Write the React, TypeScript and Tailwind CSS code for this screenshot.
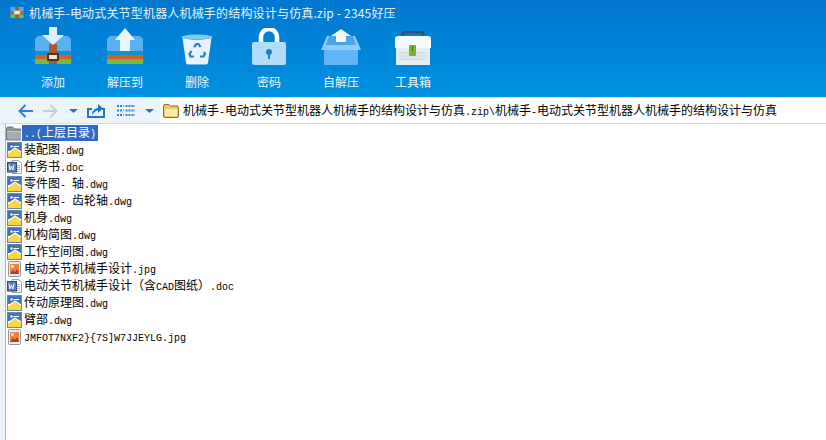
import React from "react";

const mono = { fontFamily: '"Liberation Mono","Noto Sans CJK SC",monospace' };
const ui = { fontFamily: '"Noto Sans CJK SC",sans-serif' };

function Mixed({ text }: { text: string }) {
  const runs = text.match(/[\x20-\x7e]+|[^\x20-\x7e]+/g) ?? [];
  return (
    <span className="whitespace-pre">
      {runs.map((r, i) => (
        <span key={i} className={/^[\x20-\x7e]/.test(r) ? "text-[10px]" : "text-[12px]"}>
          {r}
        </span>
      ))}
    </span>
  );
}

function Dwg() {
  return (
    <svg width="16" height="16" viewBox="0 0 16 16" className="shrink-0">
      <rect x="1.5" y="0.5" width="14" height="15" fill="#fff" stroke="#6d87a8" />
      <rect x="2" y="1" width="13" height="8" fill="#3d78bd" />
      <path d="M2 11 L9 6 L15 10 L15 15 L2 15Z" fill="#f9d648" />
      <path d="M2 11 L9 6 L15 10" fill="none" stroke="#fff" strokeWidth="1.2" />
      <path d="M4 4.5h9" stroke="#fff" strokeWidth="1" />
      <rect x="4" y="3" width="3" height="3" fill="#fff" stroke="#1f4a7d" strokeWidth="0.6" />
    </svg>
  );
}
function Doc() {
  return (
    <svg width="16" height="16" viewBox="0 0 16 16" className="shrink-0">
      <path d="M6 1.5h6.5l3 3v10H6z" fill="#fff" stroke="#9aa3ad" />
      <path d="M10.5 6.5h3.5M10.5 8.5h3.5M10.5 10.5h3.5M10.5 12.5h3.5" stroke="#a9b8cc" />
      <rect x="1.5" y="3.5" width="9" height="9.5" fill="#5b79b8" stroke="#2d4a86" />
      <path d="M3 5.5l1.1 5.5 1.4-4 1.4 4L8 5.5" fill="none" stroke="#fff" strokeWidth="1" />
    </svg>
  );
}
function Jpg() {
  return (
    <svg width="16" height="16" viewBox="0 0 16 16" className="shrink-0">
      <rect x="2.5" y="0.5" width="12" height="15" rx="1" fill="#e8edf3" stroke="#8b97a8" />
      <rect x="4" y="3" width="9" height="10" fill="#e8833f" />
      <path d="M4 13l3-4 2 2 2-3 2 5z" fill="#b5391f" />
      <rect x="5" y="4" width="3" height="3" fill="#f7d9a0" />
    </svg>
  );
}
function UpFolder() {
  return (
    <svg width="16" height="16" viewBox="0 0 16 16" className="shrink-0">
      <path d="M0.5 3.5l1-1.5h5l2 2h6v11h-14z" fill="#8f9498" stroke="#6c7276" />
      <path d="M1 7h14v7.5H1z" fill="#a6abaf" />
      <path d="M1 6.5h14" stroke="#c7cacc" />
    </svg>
  );
}
function Folder() {
  return (
    <svg width="18" height="16" viewBox="0 0 18 16" className="shrink-0">
      <path d="M1.5 3a1.5 1.5 0 011.5-1.5h4L8.5 3H15a1.5 1.5 0 011.5 1.5V13a1.5 1.5 0 01-1.5 1.5H3A1.5 1.5 0 011.5 13z" fill="#eec968" stroke="#8e6e22" />
      <path d="M3 6h12v7H3z" fill="#fbe9a6" />
    </svg>
  );
}

function Archive({ down }: { down: boolean }) {
  return (
    <svg width="38" height="38" viewBox="0 0 38 38">
      <path d="M4 9h30l3 3v12H1V12z" fill="#58b1f1" />
      <path d="M1 24h36v4H1z" fill="#1790c8" />
      <path d="M1 28h36v4H1z" fill="#d2602f" />
      <path d="M1 32h36v5H1z" fill="#7db93d" />
      {down ? (
        <>
          <rect x="15" y="17" width="8" height="20" fill="#a9592a" />
          <rect x="13" y="26" width="12" height="8" rx="1" fill="#4d3327" />
          <rect x="15" y="28" width="8" height="4" fill="#efe7d6" />
          <path d="M15 0h8v8h7L19 18 8 8h7z" fill="#dff0fc" />
        </>
      ) : (
        <path d="M19 1l10 12h-5v11H14V13H9z" fill="#e8f5fe" />
      )}
    </svg>
  );
}
function Bin() {
  return (
    <svg width="32" height="31" viewBox="0 0 32 31">
      <ellipse cx="16" cy="3" rx="15.5" ry="2.6" fill="#79cdea" />
      <path d="M1.5 4c8 2.4 21 2.4 29 0l-3.4 24a2.5 2.5 0 01-2.5 2.5H7.4A2.5 2.5 0 014.9 28z" fill="#e8f2fa" />
      <path d="M13 13l2.5-3h2l2 3M23 18l1 2-1.5 2.5H19M13 22.5H9.5L8.500 20l2-3" fill="none" stroke="#1c80c9" strokeWidth="2.2" />
    </svg>
  );
}
function Lock() {
  return (
    <svg width="34" height="37" viewBox="0 0 34 37">
      <path d="M9 15V9a8 8 0 0116 0v6" fill="none" stroke="#fff" strokeWidth="4.5" />
      <rect x="0" y="14" width="34" height="23" rx="2" fill="#b3dcfa" />
      <circle cx="17" cy="24" r="3" fill="#1d7fc8" />
      <rect x="16" y="25" width="2" height="6" fill="#1d7fc8" />
    </svg>
  );
}
function Box() {
  return (
    <svg width="40" height="36" viewBox="0 0 40 36">
      <path d="M3 14h34v21a1 1 0 01-1 1H4a1 1 0 01-1-1z" fill="#63b5f6" />
      <path d="M6 7h28l6 14H0z" fill="#8fcbf7" />
      <path d="M8 7h24l3 9H5z" fill="#4ba3e6" />
      <path d="M20 0l10 7h-5v6H15V7h-5z" fill="#f0f8fe" />
    </svg>
  );
}
function Tool() {
  return (
    <svg width="38" height="34" viewBox="0 0 38 34">
      <path d="M9 6V3a2 2 0 012-2h16a2 2 0 012 2v3" fill="none" stroke="#3a5068" strokeWidth="2.5" />
      <path d="M4 5h30a3 3 0 013 3v9H1V8a3 3 0 013-3z" fill="#f8fbfd" />
      <rect x="2" y="17" width="34" height="17" fill="#e4eef3" />
      <path d="M5 22h28M5 25h28M5 28h28" stroke="#c3cfd8" />
      <rect x="15" y="14" width="7" height="11" rx="1" fill="#7ab22c" />
      <path d="M18.500 15v5" stroke="#3f6d12" />
    </svg>
  );
}

const tools: [React.ReactNode, string][] = [
  [<Archive down />, "添加"],
  [<Archive down={false} />, "解压到"],
  [<Bin />, "删除"],
  [<Lock />, "密码"],
  [<Box />, "自解压"],
  [<Tool />, "工具箱"],
];

const files: [string, "dwg" | "doc" | "jpg"][] = [
  ["装配图.dwg", "dwg"],
  ["任务书.doc", "doc"],
  ["零件图- 轴.dwg", "dwg"],
  ["零件图- 齿轮轴.dwg", "dwg"],
  ["机身.dwg", "dwg"],
  ["机构简图.dwg", "dwg"],
  ["工作空间图.dwg", "dwg"],
  ["电动关节机械手设计.jpg", "jpg"],
  ["电动关节机械手设计（含CAD图纸）.doc", "doc"],
  ["传动原理图.dwg", "dwg"],
  ["臂部.dwg", "dwg"],
  ["JMFOT7NXF2}{7S]W7JJEYLG.jpg", "jpg"],
];

export default function App() {
  return (
    <div className="w-[826px] h-[440px] overflow-hidden flex flex-col bg-white">
      <div className="h-[97px] shrink-0 bg-gradient-to-b from-[#0277cf] to-[#0091e1] flex flex-col">
        <div className="h-[25px] flex items-center pl-[9px] gap-[4px] text-[#e6f4fd] text-[12px]" style={ui}>
          <svg width="16" height="15" viewBox="0 0 16 16">
            <path d="M1 2h14v5H1z" fill="#5aa6e6" />
            <path d="M1 7h14v3H1z" fill="#d2602f" />
            <path d="M1 10h14v4H1z" fill="#7bb83c" />
            <rect x="6" y="2" width="4" height="12" fill="#a4582a" />
            <rect x="5" y="6" width="6" height="4" fill="#f2e6d2" />
          </svg>
          <span className="whitespace-pre tracking-[0.18px]">机械手-电动式关节型机器人机械手的结构设计与仿真.zip - 2345好压</span>
        </div>
        <div className="flex pl-[34px] gap-[34px]">
          {tools.map(([icon, label], i) => (
            <div key={i} className="flex flex-col items-center w-[38px] text-[12px] text-[#eaf6fe]" style={ui}>
              <div className="h-[40px] flex items-end justify-center">{icon}</div>
              <span className="mt-[9px] leading-[16px] whitespace-nowrap">{label}</span>
            </div>
          ))}
        </div>
      </div>
      <div className="h-[27px] shrink-0 bg-[#ecf4fb] border-t border-[#c5e2f4] border-b border-b-[#d3deea] flex items-center">
        <div className="w-[160px] shrink-0 flex items-center pl-[18px]">
          <svg width="15" height="14" viewBox="0 0 15 14"><path d="M7.500 1L1.500 7l6 6M1.500 7H15" fill="none" stroke="#2b82d0" strokeWidth="2" /></svg>
          <svg className="ml-[10px]" width="15" height="14" viewBox="0 0 15 14"><path d="M7.500 1l6 6-6 6M13.500 7H0" fill="none" stroke="#c5cdd6" strokeWidth="2" /></svg>
          <svg className="ml-[11px]" width="9" height="4" viewBox="0 0 9 4"><path d="M0 0h9L4.500 4z" fill="#2b72b8" /></svg>
          <svg className="ml-[9px]" width="18" height="15" viewBox="0 0 18 15"><path d="M5 6H1v8h16V6h-2" fill="none" stroke="#1f78c4" strokeWidth="2" /><path d="M5 12c0-4 3-7 6-7V1l5 4.500L11 10V7.500c-2 0-4 1.500-6 4.500z" fill="#1f78c4" /></svg>
          <svg className="ml-[12px]" width="18" height="11" viewBox="0 0 18 11"><path d="M0 1h6.500M8.500 1H18M0 5.500h6.500M8.500 5.500H18M0 10h6.500M8.500 10H18" stroke="#2b82d0" strokeWidth="2" strokeDasharray="2 1" /></svg>
          <svg className="ml-[10px]" width="9" height="4" viewBox="0 0 9 4"><path d="M0 0h9L4.500 4z" fill="#2b72b8" /></svg>
        </div>
        <div className="flex-1 h-[25px] bg-white flex items-center pl-[2px] gap-[3px] text-black whitespace-nowrap rounded-l-[2px]" style={mono}>
          <Folder />
          <Mixed text="机械手-电动式关节型机器人机械手的结构设计与仿真.zip\机械手-电动式关节型机器人机械手的结构设计与仿真" />
        </div>
      </div>
      <div className="flex-1 flex">
        <div className="w-[6px] shrink-0 bg-[#eef4fa] border-r border-[#a9b9c9]" />
        <div className="flex-1 text-black" style={mono}>
          <div className="h-[17px] flex items-center">
            <UpFolder />
            <span className="bg-[#316ac5] text-white h-[16px] leading-[16px] pl-[2px] pr-[2px] whitespace-nowrap"><Mixed text="..(上层目录)" /></span>
          </div>
          {files.map(([name, type]) => (
            <div key={name} className="h-[17px] flex items-center gap-[2px] whitespace-nowrap">
              {type === "dwg" ? <Dwg /> : type === "doc" ? <Doc /> : <Jpg />}
              <Mixed text={name} />
            </div>
          ))}
        </div>
      </div>
    </div>
  );
}
